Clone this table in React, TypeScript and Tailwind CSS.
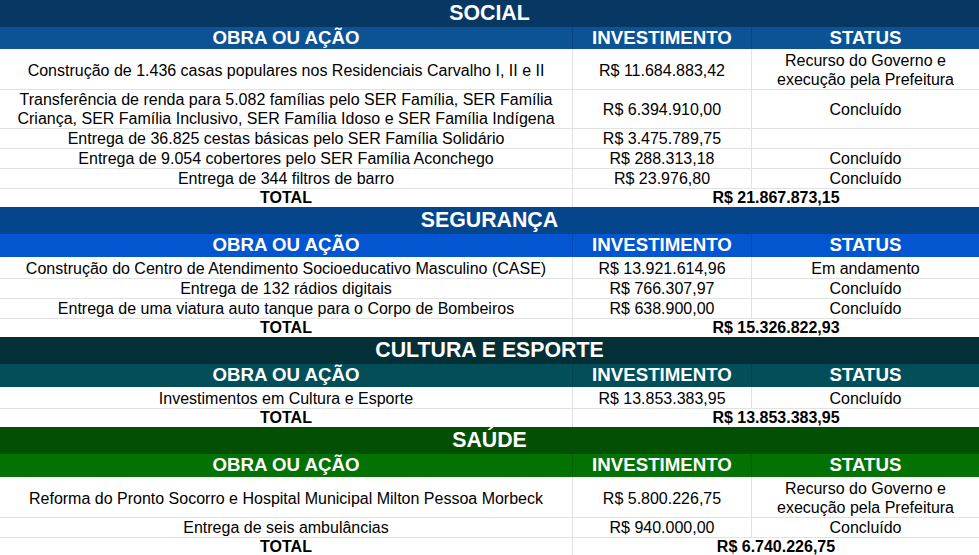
import React from "react";

type Row = {
    acao: React.ReactNode;
    inv: string;
    status: React.ReactNode;
    tall?: boolean;
};

type Section = {
    title: string;
    headBg: string;
    subBg: string;
    subH: string;
    rows: Row[];
    total: string;
};

const governo = (
    <>
        Recurso do Governo e<br />execução pela Prefeitura
    </>
);

const sections: Section[] = [
    {
        title: "SOCIAL",
        headBg: "bg-[#073763]",
        subBg: "bg-[#0b5394]",
        subH: "h-[22px]",
        rows: [
            { acao: "Construção de 1.436 casas populares nos Residenciais Carvalho I, II e II", inv: "R$ 11.684.883,42", status: governo, tall: true },
            {
                acao: (
                    <>
                        Transferência de renda para 5.082 famílias pelo SER Família, SER Família<br />
                        Criança, SER Família Inclusivo, SER Família Idoso e SER Família Indígena
                    </>
                ),
                inv: "R$ 6.394.910,00",
                status: "Concluído",
                tall: true,
            },
            { acao: "Entrega de 36.825 cestas básicas pelo SER Família Solidário", inv: "R$ 3.475.789,75", status: "" },
            { acao: "Entrega de 9.054 cobertores pelo SER Família Aconchego", inv: "R$ 288.313,18", status: "Concluído" },
            { acao: "Entrega de 344 filtros de barro", inv: "R$ 23.976,80", status: "Concluído" },
        ],
        total: "R$ 21.867.873,15",
    },
    {
        title: "SEGURANÇA",
        headBg: "bg-[#04458b]",
        subBg: "bg-[#0356d0]",
        subH: "h-[23px]",
        rows: [
            { acao: "Construção do Centro de Atendimento Socioeducativo Masculino (CASE)", inv: "R$ 13.921.614,96", status: "Em andamento" },
            { acao: "Entrega de 132 rádios digitais", inv: "R$ 766.307,97", status: "Concluído" },
            { acao: "Entrega de uma viatura auto tanque para o Corpo de Bombeiros", inv: "R$ 638.900,00", status: "Concluído" },
        ],
        total: "R$ 15.326.822,93",
    },
    {
        title: "CULTURA E ESPORTE",
        headBg: "bg-[#032f36]",
        subBg: "bg-[#024f59]",
        subH: "h-[23px]",
        rows: [
            { acao: "Investimentos em Cultura e Esporte", inv: "R$ 13.853.383,95", status: "Concluído" },
        ],
        total: "R$ 13.853.383,95",
    },
    {
        title: "SAÚDE",
        headBg: "bg-[#034f03]",
        subBg: "bg-[#037203]",
        subH: "h-[23px]",
        rows: [
            { acao: "Reforma do Pronto Socorro e Hospital Municipal Milton Pessoa Morbeck", inv: "R$ 5.800.226,75", status: governo, tall: true },
            { acao: "Entrega de seis ambulâncias", inv: "R$ 940.000,00", status: "Concluído" },
        ],
        total: "R$ 6.740.226,75",
    },
];

// célula padrão da planilha (linha de grade cinza embaixo)
const cell = "flex items-center justify-center text-center pt-[2px] border-b border-[#e2e2e2]";

function SectionBlock({ s }: { s: Section }) {
    return (
        <div>
            {/* título da seção */}
            <div className={`${s.headBg} h-[27px] flex items-center justify-center text-white font-bold text-[21.3px] leading-none`}>
                {s.title}
            </div>

            {/* cabeçalho das colunas */}
            <div className={`${s.subBg} ${s.subH} grid grid-cols-[573px_179px_227px] text-white font-bold text-[18.7px] leading-none`}>
                <div className="flex items-center justify-center border-r border-black/15">OBRA OU AÇÃO</div>
                <div className="flex items-center justify-center border-r border-black/15">INVESTIMENTO</div>
                <div className="flex items-center justify-center">STATUS</div>
            </div>

            {s.rows.map((r, i) => (
                <div
                    key={i}
                    className={`grid grid-cols-[573px_179px_227px] text-[16px] leading-[19px] text-black ${r.tall ? "h-[39px]" : "h-[20px]"}`}
                >
                    <div className={`${cell} border-r`}>{r.acao}</div>
                    <div className={`${cell} border-r`}>{r.inv}</div>
                    <div className={cell}>{r.status}</div>
                </div>
            ))}

            {/* total */}
            <div className="grid grid-cols-[573px_406px] h-[20px] text-black font-bold text-[16px] leading-none">
                <div className="flex items-center justify-center pt-px border-r border-[#e2e2e2]">TOTAL</div>
                <div className="flex items-center justify-center pt-px">{s.total}</div>
            </div>
        </div>
    );
}

export default function App() {
    return (
        <div className="w-[979px] h-[555px] overflow-hidden bg-white font-['Liberation_Sans',Arial,sans-serif]">
            {sections.map((s) => (
                <SectionBlock key={s.title} s={s} />
            ))}
        </div>
    );
}
